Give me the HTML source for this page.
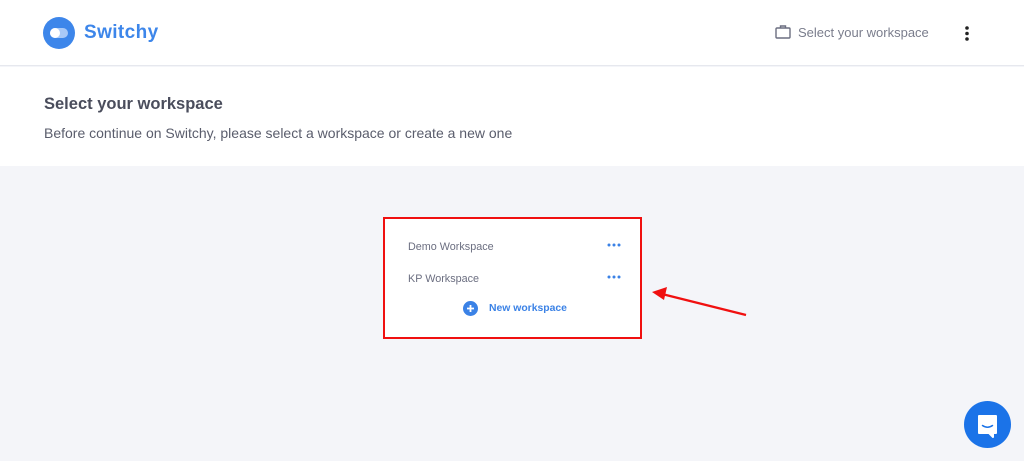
<!DOCTYPE html>
<html><head><style>
*{margin:0;padding:0;box-sizing:border-box}
body{width:1024px;height:461px;background:#f4f5f9;font-family:"Liberation Sans",sans-serif;position:relative;overflow:hidden}
.hdr{position:absolute;left:0;top:0;width:1024px;height:66px;background:#fff;border-bottom:1px solid #e6e8ee}
.sec{position:absolute;left:0;top:67px;width:1024px;height:99px;background:#fff}
.t{position:absolute;left:44px;top:95px;font-size:16.5px;font-weight:bold;color:#4a4d5c}
.s{position:absolute;left:44px;top:125px;font-size:14px;color:#5a5d6c}
.box{position:absolute;left:383px;top:217px;width:259px;height:122px;border:2px solid #f01010;background:#fff}
.it{position:absolute;font-size:10.8px;color:#6b6e80}
</style></head><body>
<div class="hdr"></div>
<svg style="position:absolute;left:43px;top:17px" width="32" height="32"><circle cx="16" cy="16" r="16" fill="#3d86ea"/><rect x="7" y="11" width="18" height="10" rx="5" fill="#a9c9f7"/><circle cx="12" cy="16" r="5" fill="#fff"/></svg>
<div style="position:absolute;left:84px;top:22px;font-size:19px;color:#3d86ea;font-weight:bold;letter-spacing:.4px">Switchy</div>
<svg style="position:absolute;left:775px;top:25px" width="16" height="14"><rect x="1" y="3" width="14" height="10" rx="1" fill="none" stroke="#6b6e80" stroke-width="1.4"/><path d="M5.5 3V1h5v2" fill="none" stroke="#6b6e80" stroke-width="1.4"/></svg>
<div style="position:absolute;left:798px;top:25px;font-size:13px;color:#7a7d8c">Select your workspace</div>
<svg style="position:absolute;left:964px;top:26px" width="6" height="16"><circle cx="3" cy="2" r="1.8" fill="#222"/><circle cx="3" cy="7.5" r="1.8" fill="#222"/><circle cx="3" cy="13" r="1.8" fill="#222"/></svg>
<div class="sec"></div>
<div class="t">Select your workspace</div>
<div class="s">Before continue on Switchy, please select a workspace or create a new one</div>
<div class="box"></div>
<div class="it" style="left:408px;top:241px">Demo Workspace</div>
<div class="it" style="left:408px;top:273px">KP Workspace</div>
<svg style="position:absolute;left:607px;top:243px" width="14" height="4"><circle cx="2" cy="2" r="1.5" fill="#3b82e6"/><circle cx="7" cy="2" r="1.5" fill="#3b82e6"/><circle cx="12" cy="2" r="1.5" fill="#3b82e6"/></svg>
<svg style="position:absolute;left:607px;top:275px" width="14" height="4"><circle cx="2" cy="2" r="1.5" fill="#3b82e6"/><circle cx="7" cy="2" r="1.5" fill="#3b82e6"/><circle cx="12" cy="2" r="1.5" fill="#3b82e6"/></svg>
<svg style="position:absolute;left:463px;top:301px" width="15" height="15"><circle cx="7.5" cy="7.5" r="7.5" fill="#3b82e6"/><path d="M7.5 4v7M4 7.5h7" stroke="#fff" stroke-width="1.8"/></svg>
<div class="it" style="left:489px;top:303px;color:#3b82e6;font-weight:bold;font-size:10.4px">New workspace</div>
<svg style="position:absolute;left:0;top:0" width="1024" height="461"><path d="M746 315L662 294" stroke="#f01010" stroke-width="2.2"/><path d="M652 292L667 287L664 300Z" fill="#f01010"/></svg>
<svg style="position:absolute;left:964px;top:401px" width="47" height="47"><circle cx="23.5" cy="23.5" r="23.5" fill="#1b73e8"/><path d="M15 15h17v17h-3v4l-4-4H15Z" fill="#fff" stroke="#fff" stroke-linejoin="round" stroke-width="2"/><path d="M18.5 24.5q5 3.5 10 0" stroke="#1b73e8" stroke-width="1.5" fill="none" stroke-linecap="round"/></svg>
</body></html>
